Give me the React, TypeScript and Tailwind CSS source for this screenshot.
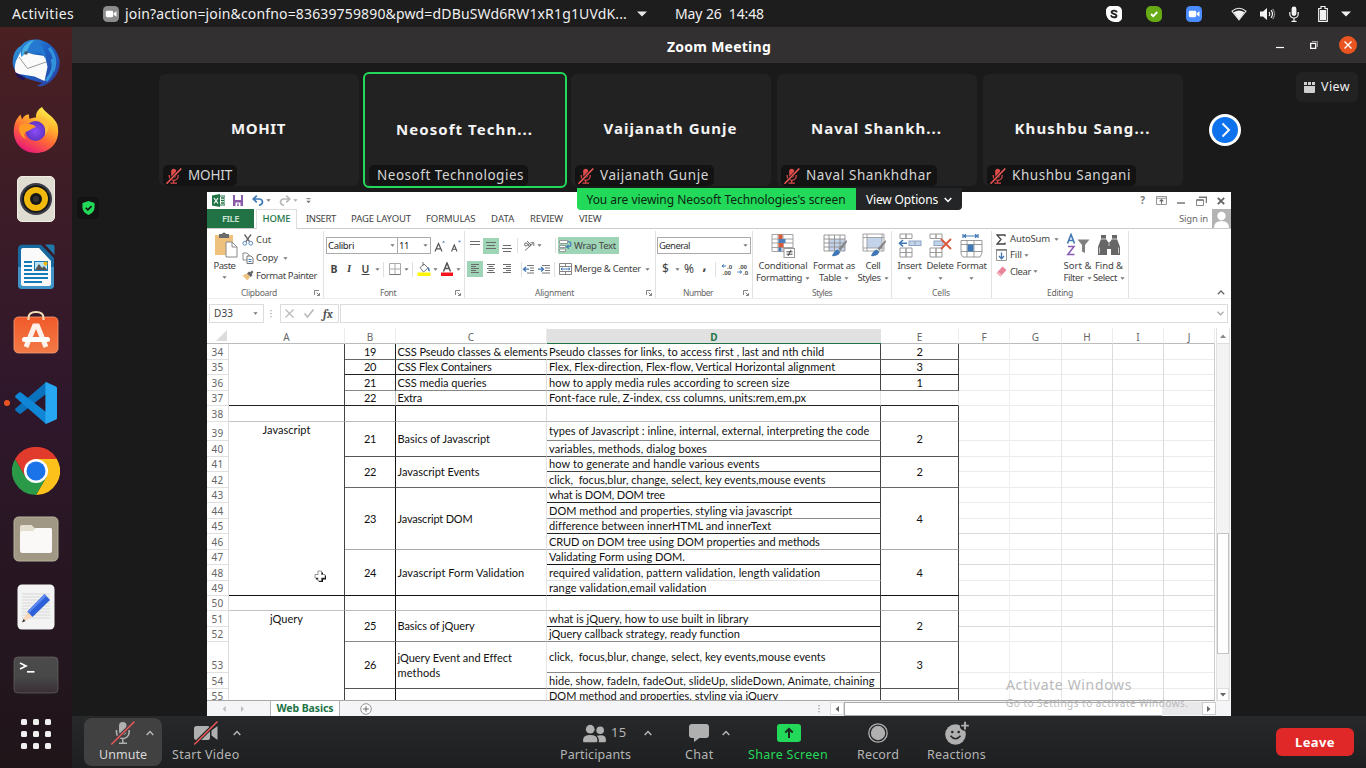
import React, { useLayoutEffect, useRef } from "react";

/* Text run whose tracking is adjusted so that it takes exactly `w` pixels. */
function Fit({ w, className = "", children }: { w: number; className?: string; children: string }) {
  const ref = useRef<HTMLSpanElement>(null);
  useLayoutEffect(() => {
    const el = ref.current;
    if (!el) return;
    el.style.letterSpacing = "0px";
    const natural = el.getBoundingClientRect().width;
    el.style.letterSpacing = `${(w - natural) / children.length}px`;
  }, [w, children]);
  return (
    <span ref={ref} className={`inline-block w-max shrink-0 whitespace-pre ${className}`}>
      {children}
    </span>
  );
}

function Tri({ className = "" }: { className?: string }) {
  return (
    <svg viewBox="0 0 5 3" className={`h-[3px] w-[5px] shrink-0 ${className}`}>
      <path d="M0.4 0.3h4.2L2.5 2.7z" fill="#777" />
    </svg>
  );
}

function Sep({ className = "" }: { className?: string }) {
  return <div className={`h-[15px] w-px shrink-0 bg-[#e0e0e0] ${className}`} />;
}

/* ---------- top bar ---------- */

function TopBar() {
  return (
    <div className="flex h-[27px] shrink-0 items-center bg-[#1d1d1d] text-[14px] leading-[20px] text-[#f0f0f0]">
      <Fit w={62} className="ml-[12px]">Activities</Fit>
      <svg viewBox="0 0 16 16" className="ml-[29px] h-[16px] w-[16px]">
        <rect width="16" height="16" rx="4.5" fill="#8c8c8c" />
        <rect x="2.8" y="4.8" width="7.4" height="6.4" rx="1.4" fill="#fff" />
        <path d="M10.8 7.2l2.7-2v5.6l-2.7-2z" fill="#fff" />
      </svg>
      <Fit w={502} className="ml-[6px]">join?action=join&amp;confno=83639759890&amp;pwd=dDBuSWd6RW1xR1g1UVdK...</Fit>
      <svg viewBox="0 0 10 6" className="ml-[10px] h-[6px] w-[10px]"><path d="M0 0.5h10L5 5.5z" fill="#e8e8e8" /></svg>
      <Fit w={89} className="ml-[28px]">May 26  14:48</Fit>
      <div className="ml-auto flex items-center pr-[15px]">
        <svg viewBox="0 0 16 16" className="h-[16px] w-[16px]">
          <path d="M5 0a5 5 0 0 0-4.4 7.2A7.6 7.6 0 0 0 8.8 15.4 4.9 4.9 0 0 0 15.4 8.8 7.6 7.6 0 0 0 7.2.6 5 5 0 0 0 5 0z" fill="#fff" />
          <path d="M11 0a5 5 0 0 1 5 5v6a5 5 0 0 1-5 5H9a9 9 0 0 1-9-9V5a5 5 0 0 1 5-5z" fill="#fff" />
          <path d="M10.6 5.6C10 4.3 5.600 4 5.600 6.200c0 2 4.900 1.200 4.900 3.500 0 2.200-4.500 2-5.200.3" fill="none" stroke="#222" strokeWidth="1.900" strokeLinecap="round" />
        </svg>
        <svg viewBox="0 0 16 16" className="ml-[24px] h-[16px] w-[16px]">
          <path d="M5 0h5a6 6 0 0 1 6 6v5a5 5 0 0 1-5 5H8a8 8 0 0 1-8-8V5a5 5 0 0 1 5-5z" fill="#66ab16" />
          <path d="M5 8l2.200 2.200L11.300 6" fill="none" stroke="#fff" strokeWidth="1.800" />
        </svg>
        <svg viewBox="0 0 16 16" className="ml-[24px] h-[16px] w-[16px]">
          <rect width="16" height="16" rx="4.500" fill="#4a8cff" />
          <rect x="2.800" y="4.800" width="7.400" height="6.400" rx="1.400" fill="#fff" />
          <path d="M10.800 7.200l2.700-2v5.600l-2.700-2z" fill="#fff" />
        </svg>
        <svg viewBox="0 0 16 14" className="ml-[29px] h-[14px] w-[16px]">
          <path d="M1 4.200Q8-1.600 15 4.200L8 12.800z" fill="none" stroke="#e8e8e8" strokeWidth="1.100" />
          <path d="M2.600 5.200Q8 1.800 13.400 5.200L8 12.600z" fill="#f2f2f2" />
        </svg>
        <svg viewBox="0 0 16 14" className="ml-[13px] h-[14px] w-[16px]">
          <path d="M0 4.500h3L7 1v12L3 9.500H0z" fill="#f2f2f2" />
          <path d="M9 5q1.500 2 0 4M11 3.200q3 3.800 0 7.600" fill="none" stroke="#f2f2f2" strokeWidth="1.200" />
          <path d="M12.600 1.800q4 5.200 0 10.400" fill="none" stroke="#8a8a8a" strokeWidth="1.200" />
        </svg>
        <svg viewBox="0 0 10 16" className="ml-[13px] mr-[1px] h-[16px] w-[10px]">
          <rect x="2.600" y="0.500" width="4.800" height="9.500" rx="2.400" fill="#f2f2f2" />
          <path d="M0.800 6v2a4.200 4 0 0 0 8.400 0V6M5 12v3M2.500 15.300h5" fill="none" stroke="#f2f2f2" strokeWidth="1.200" />
        </svg>
        <svg viewBox="0 0 10 16" className="ml-[18px] h-[16px] w-[10px]">
          <path d="M3 .5h4v2h2.300v12.800H.7V2.500H3z" fill="none" stroke="#f2f2f2" strokeWidth="1.200" />
          <rect x="2" y="4" width="6" height="10" fill="#f2f2f2" />
        </svg>
        <svg viewBox="0 0 10 6" className="ml-[13px] h-[6px] w-[10px]"><path d="M0 0.500h10L5 5.500z" fill="#f0f0f0" /></svg>
      </div>
    </div>
  );
}

/* ---------- dock ---------- */

function Dock() {
  return (
    <div className="flex w-[72px] shrink-0 flex-col items-center bg-linear-to-b from-[#4a2022] via-[#2f172b] via-50% to-[#1f1519]">
      <svg viewBox="0 0 48 48" className="mt-[12px] h-[48px] w-[48px]">
        <defs>
          <linearGradient id="tb" x1="0" y1="0" x2="1" y2="1"><stop offset="0" stopColor="#38a3dd" /><stop offset=".45" stopColor="#1c62c4" /><stop offset="1" stopColor="#2f3ea0" /></linearGradient>
        </defs>
        <path d="M18 1c12-3 27 5 29.500 20 1.500 12-7 23-18 26.500l-5-.5 6-3C24 42 12 40 5 34 1 29 0 25 1 20 1.500 13 6 8 9 7c2-3 5-5 9-6z" fill="url(#tb)" />
        <path d="M4 22l5-10 13 3.500 11 1.500 2.500 11-3 14-10-4.500L4 34.500c-2-5-1-9 0-12.500z" fill="#fafafa" />
        <path d="M7 18l8.500 11.500L34 23" fill="none" stroke="#999" strokeWidth="1" />
        <path d="M17 2C11 5 7 11 9.500 18c2-4 6-5.500 12-4 6-1 9 0 12 6C34 8 27 2 17 2z" fill="#2578d0" />
        <path d="M10 12c1-5 7-10 12-11l-4 5-4 8-4.500 4z" fill="#45aee3" />
        <path d="M37 9c6 7 7 15 4 23M40 20c3 7 0 15-6 22" fill="none" stroke="#3293db" strokeWidth="3" />
        <path d="M3 33c5 3 6 3 10 5.500l-1 3C7 40 4 37 3 33z" fill="#20135c" />
        <circle cx="14" cy="14" r="1.800" fill="#4a5563" />
      </svg>
      <svg viewBox="0 0 46 48" className="mt-[19px] h-[48px] w-[46px]">
        <defs>
          <linearGradient id="ff" x1=".8" y1=".05" x2=".3" y2="1"><stop offset="0" stopColor="#fff44f" /><stop offset=".3" stopColor="#ffb62e" /><stop offset=".6" stopColor="#ff6a36" /><stop offset="1" stopColor="#e8157b" /></linearGradient>
          <radialGradient id="fp"><stop offset="0" stopColor="#8b4cf5" /><stop offset="1" stopColor="#6135c4" /></radialGradient>
        </defs>
        <path d="M29 1c3 6 13 10 15.500 18C48 35 38 47 23 47 9 47 .5 37 .8 25 1 18 3 13 7.500 8.500l1.500 5C11 9 14 8 16 8.500c0 2 0 3 .7 4.500 1.800-1 4.300-1.500 6.300-1.500C22.500 7 25 3.500 29 1z" fill="url(#ff)" />
        <circle cx="22.500" cy="25" r="10" fill="url(#fp)" />
        <path d="M7 19c4-2 13-2 16 2-4 1-5 3-8 4-4 1-5 4-2 8-4-1-7-6-7-11z" fill="#ff9a24" />
        <path d="M20 14c8-2 14 5 12 15 6-6 4-13 0-17-4-2-8-1-12 2z" fill="#ffbd3a" />
      </svg>
      <svg viewBox="0 0 38 46" className="mt-[22px] h-[46px] w-[38px]">
        <rect x=".5" y=".5" width="37" height="45" rx="4.500" fill="#dfdcd2" stroke="#efece4" />
        <circle cx="19" cy="23" r="16" fill="#3a3c46" />
        <circle cx="19" cy="23" r="13.800" fill="#15161b" />
        <circle cx="19" cy="23" r="12" fill="#f0b90c" />
        <circle cx="19" cy="23" r="6" fill="#17171a" /><circle cx="19" cy="23" r="3" fill="#333" />
      </svg>
      <svg viewBox="0 0 38 46" className="mt-[22px] h-[46px] w-[38px]">
        <path d="M5 .8h19L37 14v27a4 4 0 0 1-4 4H5a4 4 0 0 1-4-4V5a4 4 0 0 1 4-4.200z" fill="#1769a0" />
        <path d="M1 23h36v18a4 4 0 0 1-4 4H5a4 4 0 0 1-4-4z" fill="#3f93c6" />
        <path d="M6 4h16l12 13v22.500a2.500 2.500 0 0 1-2.500 2.500H6.500A2.500 2.500 0 0 1 4 39.500V6a2 2 0 0 1 2-2z" fill="#fafafa" />
        <path d="M28 .5h7.500a2 2 0 0 1 2 2V11z" fill="#2277ab" />
        <path d="M7 18h8M7 22h8M7 26h8M7 30h24M7 34h24M7 38h18" stroke="#157ab8" strokeWidth="2" />
        <rect x="17.500" y="17.500" width="13" height="9" fill="#b9e2f2" stroke="#157ab8" />
        <path d="M18 26l4-6 3 4 2-2 3.500 4z" fill="#555" /><circle cx="28.500" cy="19.500" r="2" fill="#f3b900" />
      </svg>
      <svg viewBox="0 0 46 44" className="mt-[20px] h-[44px] w-[46px]">
        <defs><linearGradient id="sw" x1="0" y1="0" x2="0" y2="1"><stop offset="0" stopColor="#f05a28" /><stop offset="1" stopColor="#f27a48" /></linearGradient></defs>
        <rect x="1" y="7" width="44" height="36" rx="4.500" fill="url(#sw)" stroke="#f9a07a" strokeWidth=".8" />
        <path d="M15.500 10V8q0-6 7.500-6t7.500 6v2" fill="none" stroke="#f3dfb8" strokeWidth="2" />
        <path d="M13 37l8.500-21h3L33 37" fill="none" stroke="#fff" strokeWidth="5" strokeOpacity=".9" />
        <rect x="9" y="27" width="28" height="5" rx="2.500" fill="#fff" />
      </svg>
      <div className="mt-[27px] flex h-[44px] w-full items-center">
        <div className="ml-[4px] h-[6px] w-[6px] rounded-full bg-[#e95420]" />
        <svg viewBox="0 0 42 42" className="ml-[5px] h-[42px] w-[42px]">
          <path d="M31 0v12L6 31.500q-1 .5-2 0L.5 28.500q-.6-1 0-2z" fill="#0b72bd" />
          <path d="M31 42V30L6 10.500q-1-.5-2 0L.5 13.500q-.6 1 0 2z" fill="#0f86d6" />
          <path d="M31 0l10 4.500q1 .5 1 1.500v30q0 1-1 1.500L31 42q-.6-.3-.6-1.500v-39q0-1.200.6-1.500z" fill="#27a6f2" />
        </svg>
      </div>
      <svg viewBox="0 0 48 48" className="mt-[22px] h-[48px] w-[48px]">
        <path d="M24 24L3.200 12A24 24 0 0 1 44.800 12z" fill="#e13b2e" />
        <path d="M24 12h20.800A24 24 0 0 1 24 48l10.400-18z" fill="#fcc21b" />
        <path d="M13.600 30L3.200 12A24 24 0 0 0 24 48l10.400-18z" fill="#2a9a48" />
        <path d="M3.200 12L13.600 30 24 24V12h20.800A24 24 0 0 0 3.200 12z" fill="#e13b2e" />
        <circle cx="24" cy="24" r="12" fill="#fff" /><circle cx="24" cy="24" r="9.500" fill="#1a73e8" />
      </svg>
      <svg viewBox="0 0 46 46" className="mt-[21px] h-[46px] w-[46px]">
        <rect x="1" y="1" width="44" height="44" rx="4.500" fill="#a09885" stroke="#b8b19c" />
        <path d="M7 13V11a2 2 0 0 1 2-2h9.500l3 3H37a2 2 0 0 1 2 2v8H7z" fill="#e4dfd0" />
        <rect x="7" y="15" width="32" height="22" rx="2.500" fill="#faf9f7" />
        <path d="M23 12h14a2 2 0 0 1 2 2v6H10l10-5z" fill="#faf9f7" />
      </svg>
      <svg viewBox="0 0 38 46" className="mt-[22px] h-[46px] w-[38px]">
        <rect x=".5" y=".5" width="37" height="45" rx="4.500" fill="#f3f3f3" />
        <path d="M5 10h28M5 13h28M5 16h28M5 19h28M5 22h28M5 25h28M5 28h28M5 31h28M5 34h28" stroke="#cfcfcf" strokeWidth=".8" />
        <path d="M11 27l4.500 6L5 38z" fill="#f8d8b8" /><path d="M6.500 35L5 38.500l3.500-1.500z" fill="#333" />
        <path d="M27.500 10l5.500 6-17.500 17-5-5.500z" fill="#2c5fd8" /><path d="M27.500 10l2 2-18 17.500-1-2z" fill="#5a88f0" />
      </svg>
      <svg viewBox="0 0 46 38" className="mt-[26px] h-[38px] w-[46px]">
        <defs><linearGradient id="te" x1="0" y1="0" x2="0" y2="1"><stop offset="0" stopColor="#4b4b4b" /><stop offset=".55" stopColor="#484848" /><stop offset="1" stopColor="#392e36" /></linearGradient></defs>
        <rect x="1" y="1" width="44" height="36" rx="4" fill="url(#te)" stroke="#666" strokeWidth=".7" />
        <path d="M7 7l6 3-6 3" fill="none" stroke="#fff" strokeWidth="1.700" /><path d="M14 15.800h7.500" stroke="#fff" strokeWidth="1.700" />
      </svg>
      <div className="mt-[25px] grid grid-cols-3 gap-[6px]">
        {[0, 1, 2, 3, 4, 5, 6, 7, 8].map((i) => (
          <div key={i} className="h-[6px] w-[6px] rounded-[1.500px] bg-[#f0f0ee]" />
        ))}
      </div>
    </div>
  );
}

/* ---------- participants ---------- */

function MutedMic() {
  return (
    <svg viewBox="0 0 16 16" className="mr-[6px] h-[16px] w-[16px] shrink-0">
      <rect x="5.200" y=".8" width="5" height="9" rx="2.500" fill="#e04b4b" />
      <path d="M3.200 7v1a4.500 4.300 0 0 0 9 0V7M7.700 12.500V15M4.500 15.200h6.400" fill="none" stroke="#e04b4b" strokeWidth="1.200" />
      <path d="M.3 15.700L15.300.5" stroke="#191919" strokeWidth="2.900" />
      <path d="M.5 15.700L15.300.5" stroke="#ff5a5a" strokeWidth="1.400" />
    </svg>
  );
}

interface TileProps { big: string; bigW: number; small: string; smallW: number; muted?: boolean; active?: boolean }

function Tile({ big, bigW, small, smallW, muted = true, active }: TileProps) {
  const frame = active
    ? "h-[116px] w-[204px] -mx-[2px] border-2 border-[#23d959]"
    : "h-[112px] w-[200px]";
  return (
    <div className={`flex shrink-0 flex-col items-center rounded-[6px] bg-[#222222] ${frame}`}>
      <Fit w={bigW} className={`mr-[1px] text-[15px] font-bold leading-[22px] text-[#f4f4f4] ${active ? "mt-[44px]" : "mt-[43px]"}`}>{big}</Fit>
      <div className={`mt-auto ml-[4px] flex h-[21px] items-center self-start rounded-[5px] bg-[#131313] ${active ? "pl-[8px] pr-[4px]" : "pl-[3px] pr-[5px]"}`}>
        {muted && <MutedMic />}
        <Fit w={smallW} className="pb-[2px] text-[13.500px] leading-[18px] text-[#d5d5d5]">{small}</Fit>
      </div>
    </div>
  );
}

/* ---------- spreadsheet ribbon ---------- */

function Group({ className, label, labelW, labelClass, launcher, children }: { className: string; label: string; labelW: number; labelClass: string; launcher?: boolean; children: React.ReactNode }) {
  return (
    <div className={`flex h-[67px] shrink-0 flex-col border-r border-[#e2e2e2] ${className}`}>
      <div className="h-[56px]">{children}</div>
      <div className={`flex h-[11px] items-center ${labelClass}`}>
        <Fit w={labelW} className="text-[8.500px] text-[#666]">{label}</Fit>
        {launcher && (
          <svg viewBox="0 0 6 6" className="ml-auto mr-[3px] h-[6px] w-[6px]">
            <path d="M.5 5V.5H5M2.500 2.500l3 3M5.500 3v2.500H3" fill="none" stroke="#777" strokeWidth=".9" />
          </svg>
        )}
      </div>
    </div>
  );
}

function Lines({ d, className = "" }: { d: string; className?: string }) {
  return (
    <div className={`flex h-[16px] w-[16px] shrink-0 items-center justify-center ${className}`}>
      <svg viewBox="0 0 10 12" className="h-[12px] w-[10px]"><path d={d} stroke="#6b6b6b" strokeWidth="1" /></svg>
    </div>
  );
}

function Big({ className, icon, l1, w1, l2, w2 }: { className: string; icon: React.ReactNode; l1: string; w1: number; l2?: string; w2?: number }) {
  return (
    <div className={`flex shrink-0 flex-col items-center ${className}`}>
      <div className="flex h-[27px] items-center">{icon}</div>
      <Fit w={w1} className="leading-[13px]">{l1}</Fit>
      <div className="flex h-[12px] items-center">
        {l2 && <Fit w={w2 ?? 0} className="mr-[3px] leading-[12px]">{l2}</Fit>}
        <Tri />
      </div>
    </div>
  );
}

function Brush() {
  return (
    <g>
      <path d="M23.500 7l-8 8.500 2 2L24 9z" fill="#858585" />
      <path d="M14.500 16.500q-4 1.500-5.500 6.500 6 1 8.500-4z" fill="#3f78b5" />
    </g>
  );
}

function Ribbon() {
  return (
    <div className="flex h-[70px] border-b border-[#eeeeee] pt-[2px] text-[9.500px] leading-[12px] text-[#444]">
      <Group className="w-[117px]" label="Clipboard" labelW={36} labelClass="pl-[34px]" launcher>
        <div className="flex">
          <div className="flex w-[35px] flex-col items-center pt-[1px]">
            <svg viewBox="0 0 24 26" className="ml-[3px] h-[26px] w-[24px]">
              <rect x="1" y="3" width="18" height="20" fill="#eec27c" /><path d="M5 2h3q0-1.500 2-1.500T12 2h3v4H5z" fill="#6a6a6a" />
              <path d="M12 10h6l5 5v10H12z" fill="#fff" stroke="#8a8a8a" /><path d="M18 10v5h5" fill="none" stroke="#8a8a8a" />
            </svg>
            <Fit w={22} className="mt-[1px] leading-[13px]">Paste</Fit>
            <Tri className="mt-[4px]" />
          </div>
          <div>
            <div className="flex h-[18px] items-center">
              <svg viewBox="0 0 12 12" className="mr-[2px] h-[12px] w-[12px]"><path d="M2.500.5l5 7M9 .5l-5 7" stroke="#666" strokeWidth="1.300" /><circle cx="2.800" cy="9.300" r="1.900" fill="none" stroke="#5a8abf" /><circle cx="8.800" cy="9.300" r="1.900" fill="none" stroke="#5a8abf" /></svg>
              <Fit w={15}>Cut</Fit>
            </div>
            <div className="flex h-[18px] items-center">
              <svg viewBox="0 0 12 12" className="mr-[2px] h-[12px] w-[12px]"><path d="M1 1h4l2 2v5H1z" fill="#fff" stroke="#8a8a8a" /><path d="M5 4h4l2 2v5.500H5z" fill="#fff" stroke="#777" /><path d="M6.500 7.500h3M6.500 9.500h3" stroke="#3f78b5" /></svg>
              <Fit w={22}>Copy</Fit><Tri className="ml-[5px]" />
            </div>
            <div className="flex h-[17px] items-center">
              <svg viewBox="0 0 12 12" className="mr-[2px] h-[12px] w-[12px]"><path d="M.5 5.500l5 5L8 7 5 3.500z" fill="#eec27c" /><path d="M5 3.500L8.500 7l2-1.500L9.800 4l1.700-2L10 .5 8.200 2.300 7 1.500z" fill="#666" /></svg>
              <Fit w={61}>Format Painter</Fit>
            </div>
          </div>
        </div>
      </Group>

      <Group className="w-[141px]" label="Font" labelW={16} labelClass="pl-[56px]" launcher>
        <div className="mt-[6px] flex h-[17px] items-center">
          <div className="ml-[2px] flex h-[17px] w-[72px] items-center border border-[#ababab] bg-white pl-[1px] text-[#222]"><Fit w={26}>Calibri</Fit><Tri className="ml-auto mr-[2px]" /></div>
          <div className="-ml-px flex h-[17px] w-[34px] items-center border border-[#ababab] bg-white pl-[1px] text-[#222]"><Fit w={10}>11</Fit><Tri className="ml-auto mr-[2px]" /></div>
          <svg viewBox="0 0 12 12" className="ml-[3px] h-[12px] w-[12px]"><path d="M1 11.500l3.500-8 3.500 8M2.300 8.800h4.500" fill="none" stroke="#555" strokeWidth="1.200" /><path d="M8 2.500h3L9.500.8z" fill="#3f78b5" /></svg>
          <svg viewBox="0 0 12 12" className="ml-[4px] h-[12px] w-[12px]"><path d="M1.500 11.500l2.800-6.500L7 11.500M2.500 9.300h3.700" fill="none" stroke="#555" strokeWidth="1.100" /><path d="M8 .8h3L9.500 2.500z" fill="#3f78b5" /></svg>
        </div>
        <div className="mt-[7px] flex h-[16px] items-center text-[10.500px]">
          <span className="ml-[4px] w-[12px] text-center font-bold">B</span>
          <span className="ml-[3px] w-[12px] text-center font-serif font-bold italic">I</span>
          <span className="ml-[4px] w-[13px] text-center font-semibold underline">U</span>
          <Tri className="ml-[3px]" /><Sep className="ml-[3px]" />
          <svg viewBox="0 0 12 12" className="ml-[5px] h-[12px] w-[12px]"><path d="M.5.5h11v11H.5zM6 .5v11M.5 6h11" fill="none" stroke="#aaa" /><path d="M.5 11.500h11" stroke="#777" /></svg>
          <Tri className="ml-[3px]" /><Sep className="ml-[3px]" />
          <svg viewBox="0 0 14 14" className="ml-[4px] h-[14px] w-[14px]"><path d="M3 5.500L7 2l4 4-4.500 4z" fill="#fff" stroke="#777" /><path d="M6 0v4" stroke="#777" /><path d="M11 5q2.500 2 1.500 4.500-2-.5-1.500-4.500z" fill="#3f78b5" /><rect x=".5" y="10.500" width="13" height="3.500" fill="#fdf500" /></svg>
          <Tri className="ml-[2px]" />
          <svg viewBox="0 0 12 14" className="ml-[3px] h-[14px] w-[12px]"><path d="M2.500 9.500L6 1l3.500 8.500M3.800 6.500h4.500" fill="none" stroke="#555" strokeWidth="1.500" /><rect y="10.500" width="12" height="3.500" fill="#f4141c" /></svg>
          <Tri className="ml-[3px]" />
        </div>
      </Group>

      <Group className="w-[191px]" label="Alignment" labelW={39} labelClass="pl-[70px]" launcher>
        <div className="mt-[6px] flex h-[17px] items-center">
          <Lines className="ml-[2px]" d="M0 1.500h10M0 4.500h10" />
          <Lines className="bg-[#9fd5b7]" d="M0 2.500h10M1 5.500h8M0 8.500h10" />
          <Lines d="M0 8.500h10M1 11.500h8M1 5.500h8" />
          <Sep className="ml-[2px]" />
          <svg viewBox="0 0 13 12" className="ml-[5px] h-[12px] w-[13px]"><path d="M2 10.500L10.500 3M10.800 6V2.700H7.500" fill="none" stroke="#777" /><circle cx="3" cy="4.500" r="1.500" fill="none" stroke="#666" /><path d="M4 1l4 4" stroke="#666" /><circle cx="6.500" cy="5" r="1.200" fill="none" stroke="#666" /></svg>
          <Tri className="ml-[1px]" /><Sep className="ml-[13px]" />
          <div className="ml-[2px] flex h-[17px] w-[61px] items-center bg-[#9fd5b7]">
            <svg viewBox="0 0 13 12" className="ml-[1px] mr-[2px] h-[12px] w-[13px]"><path d="M.5.5h8v3h-8zM.5 5.500h6v2h-6zM.5 9h6v2.500h-6z" fill="#fff" stroke="#888" strokeWidth=".8" /><path d="M9 1.500q4 .5 2.500 4.500L8 6.800M9.500 5L7.500 7l2.500 1.500" fill="none" stroke="#3f78b5" strokeWidth="1.200" /></svg>
            <Fit w={42}>Wrap Text</Fit>
          </div>
        </div>
        <div className="mt-[7px] flex h-[16px] items-center">
          <Lines className="ml-[2px] bg-[#9fd5b7]" d="M1 1.500h8M1 3.500h5M1 5.500h8M1 7.500h5M1 9.500h8" />
          <Lines d="M1 1.500h8M2.500 3.500h5M1 5.500h8M2.500 7.500h5M1 9.500h8" />
          <Lines d="M1 1.500h8M4 3.500h5M1 5.500h8M4 7.500h5M1 9.500h8" />
          <Sep className="ml-[6px]" />
          <svg viewBox="0 0 14 12" className="h-[12px] w-[14px]"><path d="M5 2.500h7M8 5h4M8 7.500h4M5 10h7" stroke="#777" /><path d="M7 6.200H2M4 4L1.500 6.200 4 8.500" fill="none" stroke="#3f78b5" strokeWidth="1.300" /></svg>
          <svg viewBox="0 0 14 12" className="ml-[1px] h-[12px] w-[14px]"><path d="M5 2.500h8M8 5h5M8 7.500h5M5 10h8" stroke="#777" /><path d="M1 6.200h5M4 4l2.500 2.200L4 8.500" fill="none" stroke="#3f78b5" strokeWidth="1.300" /></svg>
          <Sep className="ml-[3px]" />
          <svg viewBox="0 0 13 12" className="ml-[4px] h-[12px] w-[13px]"><path d="M.5.500h12v11H.5zM.5 3.500h12M.5 8.500h12M6.500.5v3M6.500 8.500v3" fill="none" stroke="#777" strokeWidth=".9" /><path d="M2 6h9M3.500 4.800L2 6l1.500 1.200M9.500 4.800L11 6 9.500 7.200" fill="none" stroke="#3f78b5" /></svg>
          <Fit w={67} className="ml-[2px]">Merge &amp; Center</Fit><Tri className="ml-[4px]" />
        </div>
      </Group>

      <Group className="w-[97px]" label="Number" labelW={30} labelClass="pl-[27px]" launcher>
        <div className="ml-[1px] mt-[6px] flex h-[17px] w-[94px] items-center border border-[#ababab] bg-white pl-[1px] text-[#333]"><Fit w={31}>General</Fit><Tri className="ml-auto mr-[2px]" /></div>
        <div className="mt-[7px] flex h-[16px] items-center text-[12px]">
          <span className="ml-[4px] w-[11px] text-center">$</span><Tri className="ml-[4px]" />
          <Fit w={11} className="ml-[4px]">%</Fit>
          <span className="ml-[6px] w-[7px] -translate-y-[4px] text-center text-[14px] font-bold">,</span>
          <Sep className="ml-[7px]" />
          <svg viewBox="0 0 12 12" className="ml-[5px] h-[12px] w-[12px] text-[6px] font-bold"><path d="M1 3h4M2.800 1.500L1 3l1.800 1.500" fill="none" stroke="#3f78b5" /><text x="6" y="5.500" fill="#555">.0</text><text x="1.500" y="11.500" fill="#555">.00</text></svg>
          <svg viewBox="0 0 12 12" className="ml-[4px] h-[12px] w-[12px] text-[6px] font-bold"><text x="1.500" y="5.500" fill="#555">.00</text><path d="M.5 9h4M3 7.500L4.800 9 3 10.500" fill="none" stroke="#3f78b5" /><text x="6" y="11.500" fill="#555">.0</text></svg>
        </div>
      </Group>

      <Group className="w-[139px]" label="Styles" labelW={20} labelClass="pl-[59px]">
        <div className="flex pt-[1px]">
          <Big className="ml-[3px] w-[54px]" l1="Conditional" w1={49} l2="Formatting" w2={46} icon={
            <svg viewBox="0 0 24 25" className="h-[25px] w-[24px]"><path d="M1 1.500h21v17H1zM1 6h21M1 10h21M1 14.500h21M7 1.500v17M12 1.500v17" fill="none" stroke="#9a9a9a" strokeWidth=".9" /><path d="M7.500 1.500h4V6h-4z" fill="#d95a3b" /><path d="M7.500 6h7v4h-7z" fill="#4a7ebb" /><path d="M7.500 10h5v4.500h-5z" fill="#d95a3b" /><path d="M7.500 14.500h3v4h-3z" fill="#4a7ebb" /><rect x="13" y="15.500" width="10.500" height="9" fill="#fff" stroke="#999" /><path d="M15.500 18.800h6M15.500 21.200h6M20 17l-3 6" stroke="#333" strokeWidth=".9" /></svg>} />
          <Big className="ml-[2px] w-[44px]" l1="Format as" w1={42} l2="Table" w2={22} icon={
            <svg viewBox="0 0 25 25" className="ml-[3px] h-[25px] w-[25px]"><rect x="6" y="6" width="16" height="12" fill="#c3d3ea" /><path d="M1 2h21v16H1zM1 6h21M1 10h21M1 14h21M6 2v16M11.500 2v16M17 2v16" fill="none" stroke="#8f8f8f" strokeWidth=".9" /><Brush /></svg>} />
          <Big className="ml-[1px] w-[32px]" l1="Cell" w1={15} l2="Styles" w2={23} icon={
            <svg viewBox="0 0 25 25" className="ml-[2px] h-[25px] w-[25px]"><rect x="5" y="5" width="15" height="10" fill="#c3d3ea" /><path d="M1 1h21v17H1zM1 4.500h21M1 15h21M5 1v17M20 1v17" fill="none" stroke="#9a9a9a" strokeWidth=".9" /><Brush /></svg>} />
        </div>
      </Group>

      <Group className="w-[100px]" label="Cells" labelW={18} labelClass="pl-[40px]">
        <div className="flex pt-[1px]">
          <Big className="ml-[3px] w-[29px]" l1="Insert" w1={24} icon={
            <svg viewBox="0 0 24 25" className="h-[25px] w-[24px]"><path d="M2 1h6v4.500H2zM8 1h6v4.500H8zM2 15h6v9H2zM8 15h6v9H8zM2 19.500h12" fill="none" stroke="#9a9a9a" /><rect x="11" y="8" width="12" height="4.500" fill="#c3d3ea" stroke="#8da5c4" /><path d="M17 8v4.500" stroke="#8da5c4" /><path d="M9 10.200H1.500M5 7l-3.500 3.200L5 13.500" fill="none" stroke="#3f78b5" strokeWidth="1.600" /></svg>} />
          <Big className="ml-[1px] w-[30px]" l1="Delete" w1={27} icon={
            <svg viewBox="0 0 24 25" className="h-[25px] w-[24px]"><path d="M2 1h6v4.500H2zM8 1h6v4.500H8zM2 15h6v9H2zM8 15h6v9H8zM2 19.500h12" fill="none" stroke="#9a9a9a" /><rect x="6" y="8" width="9" height="4.500" fill="#c3d3ea" stroke="#8da5c4" /><path d="M13 6l10 10M23 6L13 16" stroke="#d95a3b" strokeWidth="1.900" /></svg>} />
          <Big className="ml-[1px] w-[31px]" l1="Format" w1={30} icon={
            <svg viewBox="0 0 24 25" className="h-[25px] w-[24px]"><path d="M3 1v4M18 1v4M4 3h13M6 1.300L4 3l2 1.700M15 1.300L17 3l-2 1.700" fill="none" stroke="#3f78b5" strokeWidth="1.200" /><path d="M1 7.500h21V20l-2 4H3l-2-3zM1 11.500h21M1 18.500h21M7 7.500V24M14 7.500V24" fill="#fff" stroke="#8f8f8f" strokeWidth=".9" /><rect x="7.500" y="11.500" width="6" height="7" fill="#3f78b5" /></svg>} />
        </div>
      </Group>

      <Group className="w-[137px]" label="Editing" labelW={26} labelClass="pl-[55px]">
        <div className="flex">
          <div className="w-[70px] pl-[4px]">
            <div className="flex h-[16px] items-center">
              <svg viewBox="0 0 10 11" className="h-[11px] w-[10px]"><path d="M9 2.500V1H1l4 4.500L1 10h8V8.500" fill="none" stroke="#444" strokeWidth="1.300" /></svg>
              <Fit w={40} className="ml-[4px]">AutoSum</Fit><Tri className="ml-[4px]" />
            </div>
            <div className="flex h-[16px] items-center">
              <svg viewBox="0 0 11 12" className="h-[12px] w-[11px]"><path d="M.5.5h10v11H.5z" fill="#fff" stroke="#999" /><path d="M0 1h11" stroke="#777" strokeWidth="1.500" /><path d="M5.500 3.500v6M3 7l2.500 2.800L8 7" fill="none" stroke="#3f78b5" strokeWidth="1.300" /></svg>
              <Fit w={12} className="ml-[3px]">Fill</Fit><Tri className="ml-[2px]" />
            </div>
            <div className="flex h-[17px] items-center">
              <svg viewBox="0 0 11 11" className="h-[11px] w-[11px]"><path d="M6.500.5L10.500 4 4.500 10.500.5 7z" fill="#e8859a" /><path d="M2 5.500l4 3.500-1.500 1.500L.5 7z" fill="#f3b7c3" /></svg>
              <Fit w={21} className="ml-[3px]">Clear</Fit><Tri className="ml-[2px]" />
            </div>
          </div>
          <Big className="mt-[1px] w-[31px]" l1="Sort &" w1={28} l2="Filter" w2={20} icon={
            <svg viewBox="0 0 24 25" className="h-[25px] w-[24px]"><path d="M1.500 10.500L5 1.500l3.500 9M2.800 7.500h4.500" fill="none" stroke="#3f78b5" strokeWidth="1.600" /><path d="M2 13.500h6L1.800 21.500H8.500" fill="none" stroke="#8a5bb5" strokeWidth="1.500" /><path d="M11.500 6.500h12L19 12v8l-3-1.500V12z" fill="#808080" /></svg>} />
          <Big className="mt-[1px] w-[32px]" l1="Find &" w1={28} l2="Select" w2={24} icon={
            <svg viewBox="0 0 24 25" className="h-[25px] w-[24px]"><path d="M4 2h5v4l2 3h2l2-3V2h5v4l3 8v8h-9v-6h-4v6H1v-8l3-8z" fill="#666" /><path d="M2.500 14.500v6M21.500 14.500v6M12 9v4" stroke="#ddd" strokeWidth=".8" /><path d="M3.800 6h5.500M14.700 6h5.500" stroke="#eee" strokeWidth=".8" /></svg>} />
        </div>
      </Group>
      <svg viewBox="0 0 8 5" className="ml-auto mr-[6px] mt-[59px] h-[5px] w-[8px]"><path d="M.8 4.200L4 1l3.200 3.200" fill="none" stroke="#666" strokeWidth="1.300" /></svg>
    </div>
  );
}

/* ---------- worksheet ---------- */

interface Cell { c: string; t?: string; w?: number; t2?: string; w2?: number }

const rowHeads = [
  ["34", "h-[16px]"], ["35", "h-[15px]"], ["36", "h-[16px]"], ["37", "h-[15px]"], ["38", "h-[16px]"], ["39", "h-[19px]"],
  ["40", "h-[16px]"], ["41", "h-[15px]"], ["42", "h-[16px]"], ["43", "h-[15px]"], ["44", "h-[16px]"], ["45", "h-[15px]"],
  ["46", "h-[16px]"], ["47", "h-[15px]"], ["48", "h-[16px]"], ["49", "h-[15px]"], ["50", "h-[15px]"], ["51", "h-[16px]"],
  ["52", "h-[15px]"], ["53", "h-[31px]"], ["54", "h-[16px]"], ["55", "h-[15px]"],
];

const colA: Cell[] = [
  { c: "h-[62px] border-b-[#222] border-r-[#444]" },
  { c: "h-[16px] border-b-[#c4c4c4] border-r-[#444]" },
  { c: "h-[174px] border-b-[#111] border-r-[#444]", t: "Javascript", w: 48 },
  { c: "h-[15px] border-b-[#c4c4c4] border-r-[#444]" },
  { c: "h-[100px] border-b-[#c4c4c4] border-r-[#444]", t: "jQuery", w: 33 },
];

const colB: Cell[] = [
  { c: "h-[16px] border-b-[#666] border-r-[#222]", t: "19", w: 12 },
  { c: "h-[15px] border-b-[#222] border-r-[#222]", t: "20", w: 12 },
  { c: "h-[16px] border-b-[#888] border-r-[#222]", t: "21", w: 12 },
  { c: "h-[15px] border-b-[#222] border-r-[#bbb]", t: "22", w: 12 },
  { c: "h-[16px] border-b-[#bbb] border-r-[#111]" },
  { c: "h-[35px] border-b-[#555] border-r-[#111]", t: "21", w: 12 },
  { c: "h-[31px] border-b-[#666] border-r-[#111]", t: "22", w: 12 },
  { c: "h-[62px] border-b-[#aaa] border-r-[#111]", t: "23", w: 12 },
  { c: "h-[46px] border-b-[#111] border-r-[#111]", t: "24", w: 12 },
  { c: "h-[15px] border-b-[#bbb] border-r-[#111]" },
  { c: "h-[31px] border-b-[#888] border-r-[#111]", t: "25", w: 12 },
  { c: "h-[47px] border-b-[#555] border-r-[#111]", t: "26", w: 12 },
  { c: "h-[15px] border-b-[#aaa] border-r-[#111]" },
];

const colC: Cell[] = [
  { c: "h-[16px] border-b-[#666] border-r-transparent", t: "CSS Pseudo classes & elements", w: 150 },
  { c: "h-[15px] border-b-[#222] border-r-[#ddd]", t: "CSS Flex Containers", w: 94 },
  { c: "h-[16px] border-b-[#888] border-r-[#ddd]", t: "CSS media queries", w: 89 },
  { c: "h-[15px] border-b-[#222] border-r-[#ddd]", t: "Extra", w: 24.5 },
  { c: "h-[16px] border-b-[#bbb] border-r-[#ddd]" },
  { c: "h-[35px] border-b-[#555] border-r-[#e4e4e4]", t: "Basics of Javascript", w: 92.5 },
  { c: "h-[31px] border-b-[#666] border-r-[#e4e4e4]", t: "Javascript Events", w: 82 },
  { c: "h-[62px] border-b-[#aaa] border-r-[#e4e4e4]", t: "Javascript DOM", w: 75 },
  { c: "h-[46px] border-b-[#111] border-r-[#e4e4e4]", t: "Javascript Form Validation", w: 127 },
  { c: "h-[15px] border-b-[#bbb] border-r-[#e4e4e4]" },
  { c: "h-[31px] border-b-[#888] border-r-[#e4e4e4]", t: "Basics of jQuery", w: 77 },
  { c: "h-[47px] border-b-[#555] border-r-[#e4e4e4]", t: "jQuery Event and Effect", w: 114, t2: "methods", w2: 43 },
  { c: "h-[15px] border-b-[#aaa] border-r-[#e4e4e4]" },
];

const colD: Cell[] = [
  { c: "h-[16px] border-b-[#666] border-r-[#444]", t: "Pseudo classes for links, to access first , last and nth child", w: 275 },
  { c: "h-[15px] border-b-[#222] border-r-[#444]", t: "Flex, Flex-direction, Flex-flow, Vertical Horizontal alignment", w: 286.5 },
  { c: "h-[16px] border-b-[#888] border-r-[#444]", t: "how to apply media rules according to screen size", w: 240.5 },
  { c: "h-[15px] border-b-[#222] border-r-[#e4e4e4]", t: "Font-face rule, Z-index, css columns, units:rem,em,px", w: 257 },
  { c: "h-[16px] border-b-[#bbb] border-r-[#444]" },
  { c: "h-[19px] border-b-[#888] border-r-[#444]", t: "types of Javascript : inline, internal, external, interpreting the code", w: 320.5 },
  { c: "h-[16px] border-b-[#555] border-r-[#444]", t: "variables, methods, dialog boxes", w: 158 },
  { c: "h-[15px] border-b-[#444] border-r-[#444]", t: "how to generate and handle various events", w: 210.5 },
  { c: "h-[16px] border-b-[#666] border-r-[#444]", t: "click,  focus,blur, change, select, key events,mouse events", w: 276.5 },
  { c: "h-[15px] border-b-[#222] border-r-[#444]", t: "what is DOM, DOM tree", w: 116 },
  { c: "h-[16px] border-b-[#888] border-r-[#444]", t: "DOM method and properties, styling via javascript", w: 243.5 },
  { c: "h-[15px] border-b-[#222] border-r-[#444]", t: "difference between innerHTML and innerText", w: 222 },
  { c: "h-[16px] border-b-[#aaa] border-r-[#444]", t: "CRUD on DOM tree using DOM properties and methods", w: 271 },
  { c: "h-[15px] border-b-[#111] border-r-[#444]", t: "Validating Form using DOM.", w: 136 },
  { c: "h-[16px] border-b-[#e4e4e4] border-r-[#444]", t: "required validation, pattern validation, length validation", w: 271.5 },
  { c: "h-[15px] border-b-[#111] border-r-[#444]", t: "range validation,email validation", w: 158 },
  { c: "h-[15px] border-b-[#bbb] border-r-[#444]" },
  { c: "h-[16px] border-b-[#222] border-r-[#444]", t: "what is jQuery, how to use built in library", w: 199.5 },
  { c: "h-[15px] border-b-[#888] border-r-[#444]", t: "jQuery callback strategy, ready function", w: 191 },
  { c: "h-[31px] border-b-[#888] border-r-[#444]", t: "click,  focus,blur, change, select, key events,mouse events", w: 276.5 },
  { c: "h-[16px] border-b-[#555] border-r-[#444]", t: "hide, show, fadeIn, fadeOut, slideUp, slideDown, Animate, chaining", w: 325.5 },
  { c: "h-[15px] border-b-[#aaa] border-r-[#444]", t: "DOM method and properties, styling via jQuery", w: 229.5 },
];

const colE: Cell[] = [
  { c: "h-[16px] border-b-[#666] border-r-[#444]", t: "2", w: 6 },
  { c: "h-[15px] border-b-[#222] border-r-[#444]", t: "3", w: 6 },
  { c: "h-[16px] border-b-[#777] border-r-[#444]", t: "1", w: 6 },
  { c: "h-[15px] border-b-[#222] border-r-[#e4e4e4]" },
  { c: "h-[16px] border-b-[#bbb] border-r-[#444]" },
  { c: "h-[35px] border-b-[#555] border-r-[#444]", t: "2", w: 6 },
  { c: "h-[31px] border-b-[#666] border-r-[#444]", t: "2", w: 6 },
  { c: "h-[62px] border-b-[#aaa] border-r-[#444]", t: "4", w: 6 },
  { c: "h-[46px] border-b-[#111] border-r-[#444]", t: "4", w: 6 },
  { c: "h-[15px] border-b-[#bbb] border-r-[#444]" },
  { c: "h-[31px] border-b-[#888] border-r-[#444]", t: "2", w: 6 },
  { c: "h-[47px] border-b-[#555] border-r-[#444]", t: "3", w: 6 },
  { c: "h-[15px] border-b-[#aaa] border-r-[#444]" },
];

const strong = new Set(["45", "47", "49", "51"]);

function Column({ cells, width, place }: { cells: Cell[]; width: string; place: string }) {
  return (
    <div className={`flex shrink-0 flex-col ${width}`}>
      {cells.map((cell, i) => (
        <div key={i} className={`flex shrink-0 flex-col border-b border-r ${place} ${cell.c}`}>
          {cell.t && <Fit w={cell.w ?? 0} className="leading-[15px]">{cell.t}</Fit>}
          {cell.t2 && <Fit w={cell.w2 ?? 0} className="leading-[15px]">{cell.t2}</Fit>}
        </div>
      ))}
    </div>
  );
}

function Worksheet() {
  return (
    <div className="flex h-[373px] shrink-0">
      <div className="w-[1008px] shrink-0 overflow-hidden border-b border-[#a8a8a8]">
        <div className="flex h-[16px] text-[10px] leading-[12px] text-[#666]">
          <div className="flex w-[22px] shrink-0 items-end justify-end border-b border-[#bbb] p-[2px]">
            <svg viewBox="0 0 11 11" className="h-[11px] w-[11px]"><path d="M11 0v11H0z" fill="#dcdcdc" /></svg>
          </div>
          {[["A", "w-[116px]"], ["B", "w-[51px]"], ["C", "w-[151px]"]].map(([n, w]) => (
            <div key={n} className={`flex shrink-0 items-end justify-center border-b border-r border-b-[#bbb] border-r-[#ececec] ${w}`}>{n}</div>
          ))}
          <div className="flex w-[334px] shrink-0 items-end justify-center border-b border-[#217346] bg-linear-to-b from-white from-[1px] to-[#e1e1e1] to-[1px] font-bold text-[#217346]">D</div>
          {[["E", "w-[78px]"], ["F", "w-[51px]"], ["G", "w-[52px]"], ["H", "w-[51px]"], ["I", "w-[51px]"], ["J", "w-[51px]"]].map(([n, w]) => (
            <div key={n} className={`flex shrink-0 items-end justify-center border-b border-r border-b-[#bbb] border-r-[#ececec] ${w}`}>{n}</div>
          ))}
        </div>
        <div className="flex h-[356px] overflow-hidden font-['Lato'] text-[11px] text-[#111]">
          <div className="flex w-[22px] shrink-0 flex-col border-r border-[#ddd] font-['Noto_Sans'] text-[10px] text-[#666]">
            {rowHeads.map(([n, h]) => (
              <div key={n} className={`flex shrink-0 items-end justify-center border-b border-[#e0e0e0] ${h}`}><Fit w={12} className="leading-[13px]">{n}</Fit></div>
            ))}
          </div>
          <Column cells={colA} width="w-[116px]" place="items-center" />
          <Column cells={colB} width="w-[51px]" place="items-center justify-center pb-[1px]" />
          <Column cells={colC} width="w-[151px]" place="items-start justify-center pb-[1px] pl-[1.500px]" />
          <Column cells={colD} width="w-[334px]" place="items-start justify-center pb-[1px] pl-[2px]" />
          <Column cells={colE} width="w-[78px]" place="items-center justify-center pb-[1px]" />
          {["w-[51px] border-[#efefef]", "w-[52px] border-[#e6e6e6]", "w-[51px] border-[#dcdcdc]", "w-[51px] border-[#dcdcdc]", "w-[51px] border-[#cccccc]"].map((w, i) => (
            <div key={i} className={`flex shrink-0 flex-col border-r ${w}`}>
              {rowHeads.map(([n, h]) => (
                <div key={n} className={`shrink-0 border-b ${strong.has(n) ? "border-[#dadada]" : "border-[#ebebeb]"} ${h}`} />
              ))}
            </div>
          ))}
        </div>
      </div>
      <div className="ml-[1px] flex w-[14px] flex-col border-x border-[#e2e2e2] bg-[#f3f3f3]">
        <div className="flex h-[16px] items-center justify-center border-b border-[#ddd] bg-white"><svg viewBox="0 0 6 4" className="h-[4px] w-[6px]"><path d="M0 4h6L3 .5z" fill="#888" /></svg></div>
        <div className="mt-[189px] h-[121px] border border-[#c4c4c4] bg-white" />
        <div className="mt-auto flex h-[13px] items-center justify-center border border-[#ddd] bg-white"><svg viewBox="0 0 6 4" className="h-[4px] w-[6px]"><path d="M0 0h6L3 3.500z" fill="#666" /></svg></div>
      </div>
    </div>
  );
}

function SheetTabs() {
  return (
    <div className="flex h-[15px] bg-[#f5f5f7]">
      <svg viewBox="0 0 64 15" className="h-[15px] w-[63px] shrink-0"><path d="M19 5v6l-3-3z M34.500 5v6l3-3z" fill="#bbb" /></svg>
      <div className="flex w-[70px] shrink-0 items-center justify-center border-x border-[#b4b4b4] bg-white text-[10.500px] font-bold text-[#217346]"><Fit w={57}>Web Basics</Fit></div>
      <svg viewBox="0 0 12 12" className="ml-[20px] mt-[2px] h-[12px] w-[12px]"><circle cx="6" cy="6" r="5.300" fill="#fff" stroke="#888" strokeWidth=".9" /><path d="M3.200 6h5.600M6 3.200v5.600" stroke="#666" /></svg>
      <svg viewBox="0 0 3 8" className="ml-auto mt-[4px] h-[8px] w-[3px]"><path d="M1 0v1.300M1 3v1.300M1 6v1.300" stroke="#999" strokeWidth="1.300" /></svg>
      <div className="ml-[9px] mt-px flex h-[13px] w-[14px] items-center justify-center border border-[#ddd] bg-white"><svg viewBox="0 0 4 6" className="h-[6px] w-[4px]"><path d="M4 0v6L.5 3z" fill="#666" /></svg></div>
      <div className="mt-px h-[14px] w-[318px] border-y border-l border-[#aaa] bg-white" />
      <div className="mt-px h-[13px] w-[40px] bg-[#e9e8ea]" />
      <div className="mr-[15px] mt-px flex h-[13px] w-[14px] items-center justify-center border border-[#ccc] bg-white"><svg viewBox="0 0 4 6" className="h-[6px] w-[4px]"><path d="M0 0v6l3.500-3z" fill="#666" /></svg></div>
    </div>
  );
}

function Spreadsheet() {
  return (
    <div className="relative flex h-[524px] w-[1024px] shrink-0 flex-col bg-white text-[#444]">
      <div className="flex h-[17px] shrink-0 items-center pl-[5px] pr-[6px]">
        <svg viewBox="0 0 13 13" className="h-[13px] w-[13px]"><path d="M0 1.500L8 0v13L0 11.500z" fill="#217346" /><path d="M2 4l4 5.500M6 4L2 9.500" stroke="#fff" strokeWidth="1.200" /><path d="M8 2h5v9H8" fill="#fff" stroke="#217346" /><path d="M9 4h3M9 6.500h3M9 9h3" stroke="#217346" strokeWidth="1.300" /></svg>
        <svg viewBox="0 0 10 11" className="ml-[8px] h-[11px] w-[10px]"><path d="M0 0h10v11H0z" fill="#8a5aa8" /><path d="M2 0h6v5H2z" fill="#fff" /><path d="M2.500 7.500h5V11h-5z" fill="#fff" /><path d="M5 8.500V11" stroke="#8a5aa8" strokeWidth="1.500" /></svg>
        <svg viewBox="0 0 12 11" className="ml-[9px] h-[11px] w-[12px]"><path d="M1.500 4h6q3 .5 3 3t-3.500 3.300M4.800.7L1.300 4l3.500 3.300" fill="none" stroke="#3f78b5" strokeWidth="1.700" /></svg>
        <Tri className="ml-[2px]" />
        <svg viewBox="0 0 12 11" className="ml-[8px] h-[11px] w-[12px]"><path d="M10.500 4h-6q-3 .5-3 3T5 10.300M7.200.7L10.700 4 7.200 7.300" fill="none" stroke="#b8b8b8" strokeWidth="1.700" /></svg>
        <Tri className="ml-[2px] opacity-60" />
        <svg viewBox="0 0 5 6" className="ml-[8px] h-[6px] w-[5px]"><path d="M.5.7h4" stroke="#777" /><path d="M.3 2.800h4.400L2.500 5.300z" fill="#777" /></svg>
        <span className="ml-auto text-[10px] font-bold text-[#777]">?</span>
        <svg viewBox="0 0 12 10" className="ml-[11px] h-[9px] w-[11px]"><path d="M.5.500h11v9H.5zM.5 2.500h11" fill="none" stroke="#888" /><path d="M6 8.500v-4M4 6l2-2 2 2" fill="none" stroke="#666" strokeWidth="1.200" /></svg>
        <svg viewBox="0 0 8 8" className="ml-[10px] h-[8px] w-[8px]"><path d="M0 6h8" stroke="#777" strokeWidth="1.500" /></svg>
        <svg viewBox="0 0 11 10" className="ml-[11px] h-[10px] w-[11px]"><path d="M.5 4h7v5.500h-7z" fill="none" stroke="#888" /><path d="M.5 4h7M3 1.200h7.500V7" fill="none" stroke="#777" strokeWidth="1.500" /></svg>
        <svg viewBox="0 0 8 8" className="ml-[10px] h-[8px] w-[8px]"><path d="M.8.800l6.400 6.400M7.200.800L.8 7.200" stroke="#666" strokeWidth="1.900" /></svg>
      </div>
      <div className="flex h-[20px] shrink-0 items-center border-b border-[#cccccc] text-[9.500px] leading-[12px]">
        <div className="flex h-[19px] w-[47px] items-center justify-center bg-[#217346] font-semibold text-[#c9e4d3]"><Fit w={17}>FILE</Fit></div>
        <div className="-mb-px ml-[2px] flex h-[20px] w-[41px] items-center justify-center border border-b-0 border-[#dedede] bg-white pb-[1px] font-medium text-[#217346]"><Fit w={28}>HOME</Fit></div>
        <Fit w={30} className="ml-[9px]">INSERT</Fit>
        <Fit w={60} className="ml-[15px]">PAGE LAYOUT</Fit>
        <Fit w={49.5} className="ml-[15px]">FORMULAS</Fit>
        <Fit w={23.5} className="ml-[15.500px]">DATA</Fit>
        <Fit w={33} className="ml-[15.500px]">REVIEW</Fit>
        <Fit w={22.5} className="ml-[16px]">VIEW</Fit>
        <Fit w={29} className="ml-auto text-[#666]">Sign in</Fit>
        <svg viewBox="0 0 19 19" className="ml-[4px] h-[19px] w-[19px]"><rect width="19" height="19" fill="#b4b4b4" /><circle cx="9.500" cy="7" r="4.200" fill="#fff" /><path d="M2 19q0-7 7.500-7t7.500 7z" fill="#fff" /></svg>
      </div>
      <Ribbon />
      <div className="flex h-[29px] shrink-0 items-start pt-[5px] text-[10px]">
        <div className="ml-[2px] flex h-[19px] w-[55px] items-center border border-[#dcdcdc] pl-[4px]"><Fit w={19}>D33</Fit><Tri className="ml-auto mr-[5px]" /></div>
        <svg viewBox="0 0 3 8" className="ml-[6px] mt-[6px] h-[8px] w-[3px]"><path d="M1 0v1.300M1 3v1.300M1 6v1.300" stroke="#aaa" strokeWidth="1.300" /></svg>
        <div className="ml-[7px] flex h-[19px] w-[59px] items-center border border-[#dcdcdc]">
          <svg viewBox="0 0 9 9" className="ml-[4px] h-[9px] w-[9px]"><path d="M.5.500l8 8M8.500.500l-8 8" stroke="#bbb" strokeWidth="1.300" /></svg>
          <svg viewBox="0 0 10 9" className="ml-[10px] h-[9px] w-[10px]"><path d="M.5 4.500l3 3.500 6-7.500" fill="none" stroke="#bbb" strokeWidth="1.700" /></svg>
          <span className="ml-[9px] font-serif text-[12px] font-bold italic text-[#555]">fx</span>
        </div>
        <div className="ml-[1px] flex h-[19px] w-[888px] items-center border border-[#dcdcdc]">
          <svg viewBox="0 0 7 5" className="ml-auto mr-[3px] h-[5px] w-[7px]"><path d="M.5.800l3 3 3-3" fill="none" stroke="#aaa" strokeWidth="1.300" /></svg>
        </div>
      </div>
      <Worksheet />
      <SheetTabs />
      <svg viewBox="0 0 12 12" className="absolute left-[107px] top-[378px] h-[12px] w-[12px]"><path d="M5 2.500h4v3h3v4H9v2.500H5V9.500H2v-4h3z" fill="#111" /><path d="M4 1h3.500v3.500H11V8H7.500v3H4V8H1V4.500h3z" fill="#fff" stroke="#555" strokeWidth=".6" /></svg>
      <div className="absolute left-[799px] top-[483px] flex flex-col items-start text-[#b9b9bb]">
        <Fit w={126} className="text-[14px] leading-[20px]">Activate Windows</Fit>
        <Fit w={182.5} className="text-[10px] leading-[16px]">Go to Settings to activate Windows.</Fit>
      </div>
      <div className="absolute left-[370px] top-[-4px] flex h-[22px] overflow-hidden rounded-b-[4px] text-[12px] leading-[18px]">
        <div className="flex w-[279px] items-center justify-center bg-[#23d959] pt-[1px] text-[#0d2614]"><Fit w={259} className="mr-[1px]">You are viewing Neosoft Technologies's screen</Fit></div>
        <div className="flex w-[106px] items-center bg-[#242526] pl-[10px] pt-[1px] text-white">
          <Fit w={72}>View Options</Fit>
          <svg viewBox="0 0 8 6" className="ml-[6px] h-[6px] w-[8px]"><path d="M.7.900L4 4.500 7.300.900" fill="none" stroke="#fff" strokeWidth="1.500" /></svg>
        </div>
      </div>
    </div>
  );
}

/* ---------- meeting toolbar ---------- */

function Caret({ className }: { className: string }) {
  return (
    <svg viewBox="0 0 8 6" className={`h-[6px] w-[8px] shrink-0 ${className}`}><path d="M.7 5L4 1.500 7.300 5" fill="none" stroke="#b5b5b5" strokeWidth="1.500" /></svg>
  );
}

function Toolbar() {
  return (
    <div className="flex h-[52px] shrink-0 bg-linear-to-b from-[#272829] to-[#1e1f20] text-[12.500px] leading-[18px] text-[#b5b5b5]">
      <div className="ml-[12px] mt-[2px] flex h-[48px] w-[78px] flex-col items-center rounded-[8px] bg-[#414141]">
        <div className="mt-[2px] flex h-[26px] w-full items-center">
          <svg viewBox="0 0 26 26" className="ml-[26px] h-[26px] w-[26px]">
            <rect x="9" y="2" width="7.500" height="13" rx="3.700" fill="#b0b0b0" />
            <path d="M6.500 10v2.500a6.300 6 0 0 0 12.600 0V10M12.800 18.500V23M9 23.300h8" fill="none" stroke="#b0b0b0" strokeWidth="1.600" />
            <path d="M1 24.500L24.500 1.500" stroke="#414141" strokeWidth="3.600" /><path d="M1.300 24.500L24.500 1.500" stroke="#ee5656" strokeWidth="1.500" />
          </svg>
          <Caret className="ml-[10px]" />
        </div>
        <Fit w={48} className="text-[#d8d8d8]">Unmute</Fit>
      </div>
      <div className="ml-[9px] mt-[4px] flex w-[70px] flex-col items-start">
        <div className="flex h-[26px] items-center">
          <svg viewBox="0 0 26 26" className="ml-[22px] h-[26px] w-[26px]">
            <rect x="1" y="6" width="16" height="14" rx="2.500" fill="#b0b0b0" /><path d="M18.500 10.500l6-4.500v14l-6-4.500z" fill="#b0b0b0" />
            <path d="M1 24.500L24.500 1.500" stroke="#242526" strokeWidth="3.600" /><path d="M1.300 24.500L24.500 1.500" stroke="#ee5656" strokeWidth="1.500" />
          </svg>
          <Caret className="ml-[14px]" />
        </div>
        <Fit w={67.5} className="ml-[1px]">Start Video</Fit>
      </div>
      <div className="ml-[319px] mt-[4px] flex w-[94px] flex-col items-start">
        <div className="flex h-[26px] items-center">
          <svg viewBox="0 0 25 20" className="ml-[22px] h-[19px] w-[25px]">
            <circle cx="8" cy="5.500" r="4.600" fill="#b0b0b0" /><path d="M.5 19v-2.500q0-5 7.500-5t7.500 5V18q0 1.300-1.300 1.300H1.500z" fill="#b0b0b0" />
            <circle cx="18.500" cy="6.500" r="4" fill="#b0b0b0" /><path d="M17 19.300q.8-4-2-7 9.500-2 9.500 4V18q0 1.300-1.300 1.300z" fill="#b0b0b0" />
          </svg>
          <Fit w={15.5} className="-mt-[2px] ml-[4px] text-[13px]">15</Fit>
          <Caret className="ml-[17px]" />
        </div>
        <Fit w={71}>Participants</Fit>
      </div>
      <div className="ml-[30px] mt-[4px] flex w-[48px] flex-col items-start">
        <div className="flex h-[26px] items-center">
          <svg viewBox="0 0 20 18" className="ml-[5px] h-[18px] w-[20px]"><path d="M3 0h14a3 3 0 0 1 3 3v8a3 3 0 0 1-3 3h-6.500L5 18v-4H3a3 3 0 0 1-3-3V3a3 3 0 0 1 3-3z" fill="#b0b0b0" /></svg>
          <Caret className="ml-[13px]" />
        </div>
        <Fit w={28.5} className="ml-[1px]">Chat</Fit>
      </div>
      <div className="ml-[16px] mt-[4px] flex w-[80px] flex-col items-center text-[#23d959]">
        <div className="flex h-[26px] items-center">
          <svg viewBox="0 0 24 18" className="ml-[2px] h-[18px] w-[24px]"><rect width="24" height="18" rx="3" fill="#23d959" /><path d="M12 14V5M8.300 8.500L12 4.800l3.700 3.700" fill="none" stroke="#1d2a21" strokeWidth="2" /></svg>
        </div>
        <Fit w={80}>Share Screen</Fit>
      </div>
      <div className="ml-[29px] mt-[4px] flex w-[42px] flex-col items-center">
        <div className="flex h-[26px] items-center"><svg viewBox="0 0 20 20" className="h-[20px] w-[20px]"><circle cx="10" cy="10" r="9.200" fill="none" stroke="#b0b0b0" strokeWidth="1.300" /><circle cx="10" cy="10" r="7.200" fill="#b0b0b0" /></svg></div>
        <Fit w={42}>Record</Fit>
      </div>
      <div className="ml-[28px] mt-[4px] flex w-[59px] flex-col items-center">
        <div className="flex h-[26px] items-center">
          <svg viewBox="0 0 24 24" className="h-[24px] w-[24px]"><circle cx="10.500" cy="13.500" r="10.300" fill="#b0b0b0" /><circle cx="20" cy="4.500" r="5.300" fill="#252627" /><path d="M20 .800v7.600M16.200 4.600h7.600" stroke="#b0b0b0" strokeWidth="1.900" /><circle cx="7.300" cy="11" r="1.300" fill="#252627" /><circle cx="13.700" cy="11" r="1.300" fill="#252627" /><path d="M5.500 14.800q5 6 10 0" fill="none" stroke="#252627" strokeWidth="1.600" /></svg>
        </div>
        <Fit w={59}>Reactions</Fit>
      </div>
      <div className="ml-auto mr-[12px] mt-[12px] flex h-[28px] w-[78px] items-center justify-center rounded-[6px] bg-[#e02828] text-[13px] font-bold text-white"><Fit w={40}>Leave</Fit></div>
    </div>
  );
}

export default function App() {
  return (
    <div className="flex h-[768px] w-[1366px] flex-col overflow-hidden bg-[#1a1a1a] font-['Noto_Sans','Open_Sans',sans-serif]">
      <TopBar />
      <div className="flex h-[741px]">
        <Dock />
        <div className="flex w-[1294px] flex-col">
          <div className="flex h-[36px] shrink-0 items-center bg-[#333031] text-[14px] font-bold text-white">
            <Fit w={104} className="ml-[595px] mt-[2px]">Zoom Meeting</Fit>
            <svg viewBox="0 0 8 8" className="ml-auto h-[8px] w-[8px]"><path d="M0 6.500h8" stroke="#fff" strokeWidth="1.200" /></svg>
            <svg viewBox="0 0 8 8" className="ml-[26px] h-[8px] w-[8px]"><path d="M.7 2.300h5v5h-5z" fill="none" stroke="#fff" strokeWidth="1.300" /><path d="M2 .500h5.500V6" fill="none" stroke="#aaa" strokeWidth=".9" /></svg>
            <svg viewBox="0 0 18 18" className="ml-[21px] mr-[9px] h-[18px] w-[18px]"><circle cx="9" cy="9" r="9" fill="#e95420" /><path d="M5.500 5.500l7 7M12.500 5.500l-7 7" stroke="#fff" strokeWidth="1.400" /></svg>
          </div>
          <div className="flex h-[129px] shrink-0 items-start">
            <div className="ml-[87px] mt-[9px] flex h-[116px] items-center gap-[6px]">
              <Tile big="MOHIT" bigW={55} small="MOHIT" smallW={44} />
              <Tile big="Neosoft Techn..." bigW={137} small="Neosoft Technologies" smallW={147} muted={false} active />
              <Tile big="Vaijanath Gunje" bigW={134} small="Vaijanath Gunje" smallW={109} />
              <Tile big="Naval Shankh..." bigW={131} small="Naval Shankhdhar" smallW={126} />
              <Tile big="Khushbu Sang..." bigW={136} small="Khushbu Sangani" smallW={119} />
            </div>
            <svg viewBox="0 0 32 32" className="ml-[26px] mt-[51px] h-[32px] w-[32px]"><circle cx="16" cy="16" r="16" fill="#fff" /><circle cx="16" cy="16" r="13" fill="#0e72ed" /><path d="M13.500 9.500L20 16l-6.500 6.500" fill="none" stroke="#fff" strokeWidth="1.900" /></svg>
            <div className="ml-auto mr-[8px] mt-[9px] flex h-[30px] w-[62px] items-center rounded-[6px] bg-[#222222] pl-[8px] text-[12.500px] text-[#f0f0f0]">
              <svg viewBox="0 0 11 11" className="mr-[6px] h-[11px] w-[11px]"><path d="M0 0h3v3H0zM4 0h3v3H4zM8 0h3v3H8zM0 4h11v6a1 1 0 0 1-1 1H1a1 1 0 0 1-1-1z" fill="#d0d0d0" /></svg>
              <Fit w={29}>View</Fit>
            </div>
          </div>
          <div className="flex h-[524px] shrink-0">
            <div className="w-[135px] shrink-0 pl-[5px] pt-[5px]">
              <div className="flex h-[22px] w-[22px] items-center justify-center rounded-[4px] bg-[#131313]">
                <svg viewBox="0 0 14 15" className="h-[14px] w-[13px]"><path d="M7 0l6.500 2.200v4.500q0 5.300-6.500 8.300Q.5 12 .5 6.700V2.200z" fill="#23d959" /><path d="M4 7.200l2.300 2.300L10.300 5.500" fill="none" stroke="#111" strokeWidth="1.700" /></svg>
              </div>
            </div>
            <Spreadsheet />
          </div>
          <Toolbar />
        </div>
      </div>
    </div>
  );
}
